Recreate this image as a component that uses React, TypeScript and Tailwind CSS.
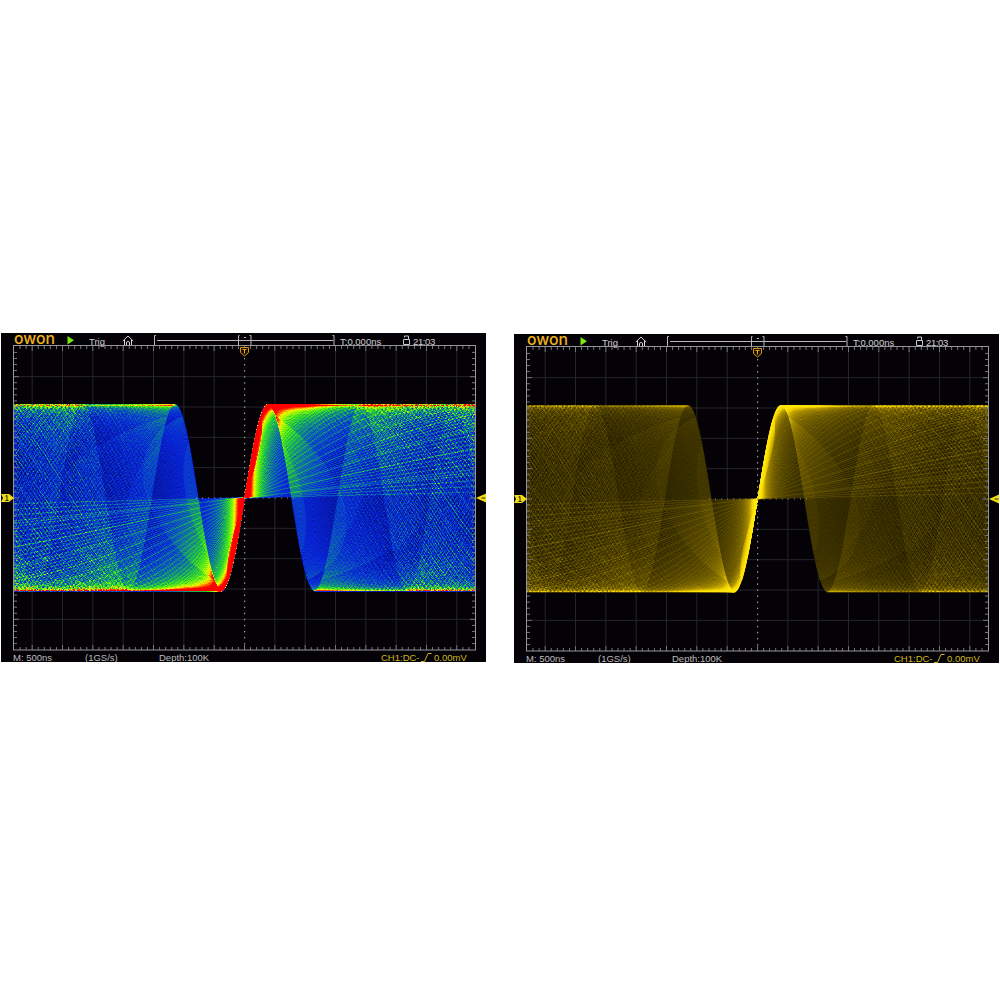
import { useLayoutEffect, useRef } from "react";

const W = 485;
const H = 306;
const CX = 243.5;
const CY = 152.3;
const AMP = 93;
const LEFT = 13;
const RIGHT = 474;
const DIV = 30.33;
const K_MAX = (2 * Math.PI) / 93;

type Mode = "temperature" | "phosphor";
type Stop = [number, number, number, number];

const palettes: Record<Mode, Stop[]> = {
  temperature: [
    [0, 2, 4, 40],
    [0.1, 4, 14, 120],
    [0.25, 8, 34, 215],
    [0.36, 10, 80, 195],
    [0.48, 20, 140, 130],
    [0.6, 40, 210, 50],
    [0.7, 120, 245, 10],
    [0.8, 250, 245, 0],
    [0.88, 255, 80, 0],
    [0.93, 255, 0, 0],
    [1, 255, 0, 0],
  ],
  phosphor: [
    [0, 18, 14, 0],
    [0.1, 44, 36, 0],
    [0.25, 74, 61, 0],
    [0.45, 112, 93, 0],
    [0.7, 175, 147, 0],
    [0.86, 240, 208, 0],
    [1, 255, 232, 10],
  ],
};

function pickColor(stops: Stop[], v: number) {
  let i = 1;
  while (i < stops.length - 1 && v > stops[i][0]) i++;
  const a = stops[i - 1];
  const b = stops[i];
  const t = Math.min(1, Math.max(0, (v - a[0]) / (b[0] - a[0])));
  return [a[1] + (b[1] - a[1]) * t, a[2] + (b[2] - a[2]) * t, a[3] + (b[3] - a[3]) * t];
}

// hit count per pixel for a sine swept from DC up to K_MAX
function sweepDensity() {
  const hits = new Float32Array(W * H);

  const addCurve = (k: number, base: number, near: number, far: number) => {
    for (let col = LEFT; col <= RIGHT; col++) {
      const dist = Math.abs(col - CX);
      const focus = Math.exp(-Math.pow(dist / 31, 4));
      const weight = base + near * focus + far * (1 - focus);
      for (let s = 0; s < 2; s++) {
        const phase = k * (col + s / 2 - CX);
        const slope = Math.abs(AMP * k * Math.cos(phase)) / 2;
        const y = CY - AMP * Math.sin(phase);
        const steps = Math.max(1, Math.round(slope));
        const w = weight / 2 / Math.pow(steps, 0.4);
        for (let j = 0; j < steps; j++) {
          const yy = y + (j / steps - 0.5) * slope;
          // hold most of the hit in one row so the traces keep their grain
          const row = Math.round(yy);
          const next = yy > row ? 1 : -1;
          hits[row * W + col] += w * 0.78;
          hits[(row + next) * W + col] += w * 0.22;
        }
      }
    }
  };

  const n = 250;
  for (let i = 1; i <= n; i++) {
    const u = i / n;
    addCurve(K_MAX * u, 0.57, 0.2 * u + 0.95 * Math.pow(u, 5), -0.16 * Math.pow(u, 6));
  }
  // slow steps stay on screen longer and show as a fan of rays
  const rays = 56;
  for (let i = 1; i < rays * 0.5; i++) {
    addCurve((K_MAX * i) / rays, 0.55 * (1 - i / rays), 0, 0);
  }

  for (let row = 0; row < H; row++) {
    const edge = Math.pow(Math.abs(row - CY) / AMP, 16);
    for (let col = LEFT; col <= RIGHT; col++) {
      const i = row * W + col;
      const dist = Math.abs(col - CX);
      const far = Math.max(0, dist - 60);
      const hash = Math.sin(row * 127.1 + col * 311.7) * 43758.5453;
      const grain = hash - Math.floor(hash) - 0.5;
      const weave = Math.sin(dist * 1.55) * Math.sin(row * 1.05 + dist * 0.12);
      hits[i] *= 1 / (1 + Math.min(0.3, far / 100) * Math.min(1, edge));
      hits[i] *= 1 + (grain * 0.75 + weave * 0.4) * Math.min(1, far / 110);
    }
  }
  return hits;
}

const density = sweepDensity();

function Trace({ mode }: { mode: Mode }) {
  const ref = useRef<HTMLCanvasElement>(null);

  useLayoutEffect(() => {
    const ctx = ref.current?.getContext("2d");
    if (!ctx) return;
    const img = ctx.createImageData(W, H);
    const gain = mode === "temperature" ? 0.5 : 0.33;
    for (let i = 0; i < density.length; i++) {
      const d = density[i];
      if (d < 0.02) continue;
      const v = 1 - Math.exp(-d * gain);
      const [r, g, b] = pickColor(palettes[mode], v * 1.04);
      img.data[i * 4] = r;
      img.data[i * 4 + 1] = g;
      img.data[i * 4 + 2] = b;
      img.data[i * 4 + 3] = Math.min(255, 90 + d * 900);
    }
    ctx.putImageData(img, 0, 0);
  }, [mode]);

  return <canvas ref={ref} width={W} height={H} className="absolute inset-0" />;
}

function Graticule() {
  const cols = [-7, -6, -5, -4, -3, -2, -1, 1, 2, 3, 4, 5, 6, 7];
  const rows = [-4, -3, -2, -1, 1, 2, 3, 4];
  return (
    <svg className="absolute inset-0" width={W} height={H} fill="none">
      <g stroke="#252629" strokeWidth="1">
        {cols.map((c) => (
          <line key={c} x1={CX + c * DIV} x2={CX + c * DIV} y1="1" y2="305" />
        ))}
        {rows.map((r) => (
          <line key={r} y1={153 + r * DIV} y2={153 + r * DIV} x1="13" x2="474" />
        ))}
      </g>
    </svg>
  );
}

function Frame() {
  const xs = Array.from({ length: 75 }, (_, i) => i - 37);
  const ys = Array.from({ length: 49 }, (_, i) => i - 24);
  return (
    <svg className="absolute inset-0" width={W} height={H} fill="none">
      <g stroke="#77777b" strokeWidth="1">
        {xs.map((i) => {
          const x = CX + (i * DIV) / 5;
          const len = i % 5 === 0 ? 5 : 3;
          return <path key={i} d={`M${x} 1v${len}M${x} 305v${-len}`} />;
        })}
        {ys.map((i) => {
          const y = 153 + (i * DIV) / 5;
          const len = i % 5 === 0 ? 5 : 3;
          return <path key={i} d={`M13 ${y}h${len}M474 ${y}h${-len}`} />;
        })}
      </g>
      <g fill="#a0a0a0">
        {ys.map((i) => (
          <rect key={i} x={CX - 0.5} y={152.5 + (i * DIV) / 5} width="1.2" height="1.4" />
        ))}
        {xs.map((i) => (
          <rect key={i} x={CX + (i * DIV) / 5} y="152.5" width="1" height="1" opacity={Math.abs(i) < 9 ? 1 : 0.2} />
        ))}
      </g>
      <rect x="12.5" y="0.5" width="462" height="304.5" stroke="#96969a" />
      {/* trigger position */}
      <path d="M239.5 2.5h8v5l-4 3.5-4-3.5z" fill="#1a1000" stroke="#d9951a" />
      <path d="M241.5 4.5h4M243.5 4.5v4" stroke="#e8a820" />
      {/* channel 1 ground */}
      <path d="M0 149h8l5 4-5 4H0l2-4z" fill="#f0dc14" />
      <path d="M4.5 151.2l1.5-.7v5M4.5 155.5h3" stroke="#2a2400" />
      {/* trigger level */}
      <path d="M475 153l10-4.5v9z" fill="#f0dc14" />
      <path d="M480.5 153h4" stroke="#3a3200" />
    </svg>
  );
}

function Header() {
  return (
    <div className="grid h-[12px] grid-cols-[13px_53px_22px_33px_31px_187px_62px_11px_1fr] items-center text-[#cfcfcf]">
      <span />
      <svg width="42" height="12" className="overflow-visible">
        <text
          x="0"
          y="10.4"
          textLength="41"
          lengthAdjust="spacingAndGlyphs"
          className="fill-[#f0b41c] font-['Inter'] text-[15px] font-medium"
        >
          owon
        </text>
      </svg>
      <svg width="8" height="12">
        <path d="M0.5 2l6.5 4.2-6.5 4.2z" fill="#7be80c" />
      </svg>
      <span className="pt-[4px]">Trig</span>
      <svg width="12" height="12" fill="none" stroke="#d8d8d8">
        <path d="M0.8 7L6 2l5.2 5M2.5 6v5.5h2V8.2q1.5-1.6 3 0v3.3h2V6" />
      </svg>
      <svg width="187" height="12" fill="none" stroke="#b8b8b8">
        <path d="M3 1.5H1.5v10H3M4 6.5h176M179.5 1.5H181v10h-1.5" />
        <path d="M86.5 1.5H85.5v10h1M96.5 1.5h1.5v10h-1.5" />
        <path d="M91 3.5h2" />
      </svg>
      <span className="pt-[4px]">T:0.000ns</span>
      <svg width="9" height="12" fill="none" stroke="#c8c8c8">
        <path d="M1.5 5.5h6v5h-6zM2.5 3.5v-1.5h4v3.5" />
      </svg>
      <span className="pt-[4px] tracking-[-0.4px]">21:03</span>
    </div>
  );
}

function Footer() {
  return (
    <div className="grid h-[11px] grid-cols-[12px_72px_74px_222px_39px_14px_1fr] items-center pt-[2px] text-[#bdbdbd]">
      <span />
      <span>M: 500ns</span>
      <span>(1GS/s)</span>
      <span>Depth:100K</span>
      <span className="text-[#cdb91c]">CH1:DC-</span>
      <svg width="12" height="10" fill="none" stroke="#cdb91c">
        <path d="M1 8.5h3.5L8 0.5h3.5" />
      </svg>
      <span className="text-[#cdb91c]">0.00mV</span>
    </div>
  );
}

function Scope({ mode }: { mode: Mode }) {
  return (
    <section className="flex h-[329px] w-[485px] flex-col overflow-hidden bg-[#050207]">
      <Header />
      <div className="relative h-[306px]">
        <Graticule />
        <Trace mode={mode} />
        <Frame />
      </div>
      <Footer />
    </section>
  );
}

export default function App() {
  return (
    <main className="flex h-[1000px] w-[1000px] items-start gap-[28px] bg-white pt-[333px] pl-px font-['Liberation_Sans',sans-serif] text-[9.5px] leading-none whitespace-nowrap">
      <Scope mode="temperature" />
      <div className="pt-px">
        <Scope mode="phosphor" />
      </div>
    </main>
  );
}
